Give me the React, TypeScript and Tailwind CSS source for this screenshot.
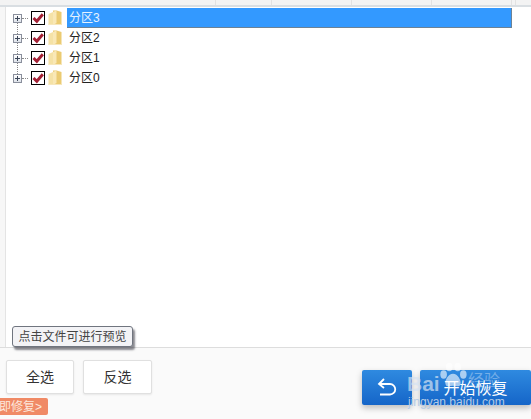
import React from "react";

const font = { fontFamily: '"Liberation Sans","Noto Sans CJK SC",sans-serif' };

function Row({ label, selected, last }: { label: string; selected?: boolean; last?: boolean }) {
  return (
    <div className="relative flex h-5 items-center">
      <div className="relative ml-[7px] h-[9px] w-[9px] shrink-0 border border-[#8a8f9c] bg-gradient-to-b from-white to-[#dfe3ea]">
        <div className="absolute left-[1px] top-[3px] h-px w-[5px] bg-[#3c4658]" />
        <div className="absolute left-[3px] top-[1px] h-[5px] w-px bg-[#3c4658]" />
      </div>
      <div className="h-0 w-[6px] shrink-0 border-t border-dotted border-[#888]" />
      <div className="ml-[3px] flex h-[14px] w-[14px] shrink-0 items-center justify-center border border-black bg-white">
        <svg width="12" height="12" viewBox="0 0 12 12">
          <path d="M1.5 6 L4.8 9.3 L10.8 2.2" fill="none" stroke="#a32035" strokeWidth="2.9" />
        </svg>
      </div>
      <svg className="ml-[3px] shrink-0" width="14" height="16" viewBox="0 0 14 16">
        <path d="M0.5 4 L5 2 L5 15 L0.5 15 Z" fill="#f5e2a6" />
        <path d="M5 0.5 L8.5 0.5 L13.5 2 L13.5 15 L5 15 Z" fill="#ebcb72" />
        <path d="M8.5 0.5 L8.5 13 L5 15 L5 2 Z" fill="#f9e8b6" />
        <path d="M0.5 14 L13.5 14 L13.5 15 L0.5 15 Z" fill="#f7e7bd" />
      </svg>
      <div
        className={`ml-[5px] flex h-5 items-center pl-[2px] text-[12px] ${
          selected ? "w-[445px] border-r border-b border-[#6c8296] bg-[#3399ff] text-[#e6f2ff]" : "text-[#222]"
        }`}
      >
        {label}
      </div>
      {!last && <div className="absolute left-[11px] top-[15px] h-[11px] border-l border-dotted border-[#888]" />}
    </div>
  );
}

export default function App() {
  return (
    <div className="relative flex h-[419px] w-[531px] flex-col overflow-hidden bg-[#fafafa]" style={font}>
      <div className="flex h-[7px] shrink-0 border-b-2 border-[#d9dee2] bg-[#f3f3f3] pl-[215px]">
        <div className="w-[56px] border-l border-[#e2e2e2]" />
        <div className="w-[80px] border-l border-[#e2e2e2]" />
        <div className="w-[80px] border-l border-[#e2e2e2]" />
        <div className="w-[80px] border-l border-[#e2e2e2]" />
        <div className="w-[4px] border-l border-[#e2e2e2]" />
        <div className="flex-1 border-l border-[#e2e2e2]" />
      </div>
      <div className="flex h-[341px] shrink-0 border-b border-[#dddddd]">
        <div className="w-[6px] shrink-0 border-r border-[#e4e4e4] bg-[#f7f7f7]" />
        <div className="flex-1 bg-white pt-[1px]">
          <Row label="分区3" selected />
          <Row label="分区2" />
          <Row label="分区1" />
          <Row label="分区0" last />
        </div>
      </div>
      <div className="flex flex-1 items-start justify-between pt-[12px]">
        <div className="ml-[6px] flex gap-[9px]">
          <button className="h-[34px] w-[68px] rounded-[2px] border border-[#e0e0e0] bg-white text-[14px] text-[#333] shadow-[0_1px_2px_rgba(0,0,0,0.08)]">全选</button>
          <button className="h-[34px] w-[69px] rounded-[2px] border border-[#e0e0e0] bg-white text-[14px] text-[#333] shadow-[0_1px_2px_rgba(0,0,0,0.08)]">反选</button>
        </div>
        <div className="mt-[10px] flex gap-[8px]">
          <button className="flex h-[35px] w-[50px] items-center justify-center rounded-[2px] bg-gradient-to-b from-[#2f8ae0] to-[#1565c8] shadow-[0_3px_6px_rgba(0,0,0,0.25)]">
            <svg width="20" height="19" viewBox="0 0 20 19" fill="none" stroke="#fff" strokeWidth="1.8">
              <path d="M7 1 L2 6 L7 10" />
              <path d="M2.5 6 H13 A5 5 0 0 1 13 16.5 H3" />
            </svg>
          </button>
          <button className="h-[35px] w-[111px] rounded-[2px] bg-gradient-to-b from-[#2f8ae0] to-[#1565c8] pt-[3px] text-[16px] text-white shadow-[0_3px_6px_rgba(0,0,0,0.25)]">
            开始恢复
          </button>
        </div>
      </div>

      <div className="absolute left-[12px] top-[326px] flex h-[21px] w-[121px] items-center justify-center rounded-[3px] border border-[#70757f] bg-[#f3f3f6] text-[12px] text-[#444] shadow-[2px_3px_2px_rgba(60,60,70,0.6)]">
        点击文件可进行预览
      </div>
      <div className="absolute left-0 top-[398px] flex h-[17px] w-[48px] items-center justify-end rounded-r-[2px] bg-[#f08a66] pr-[6px] text-[12px] text-[#fde8dc]">
        <span className="whitespace-nowrap">即修复&gt;</span>
      </div>

      <div className="pointer-events-none absolute left-[407px] top-[373px] text-[21px] font-bold leading-none text-[#d5e2f2]/70">Bai</div>
      <svg className="pointer-events-none absolute left-[438px] top-[361px]" width="30" height="29" viewBox="0 0 32 30">
        <g fill="#fff" fillOpacity="0.6">
          <ellipse cx="6" cy="14" rx="3.5" ry="4.5" />
          <ellipse cx="12" cy="6" rx="3.5" ry="4.5" />
          <ellipse cx="21" cy="6" rx="3.5" ry="4.5" />
          <ellipse cx="27" cy="14" rx="3.5" ry="4.5" />
          <path d="M16 13 C11 13 7 20 8 24 C9 28 13 26 16 26 C19 26 23 28 24 24 C25 20 21 13 16 13 Z" />
        </g>
      </svg>
      <div className="pointer-events-none absolute left-[468px] top-[373px] text-[16px] leading-none text-white/35">经验</div>
      <div className="pointer-events-none absolute left-[408px] top-[396px] text-[12px] leading-none text-[#b5cbe6]">jingyan.baidu.com</div>
    </div>
  );
}
